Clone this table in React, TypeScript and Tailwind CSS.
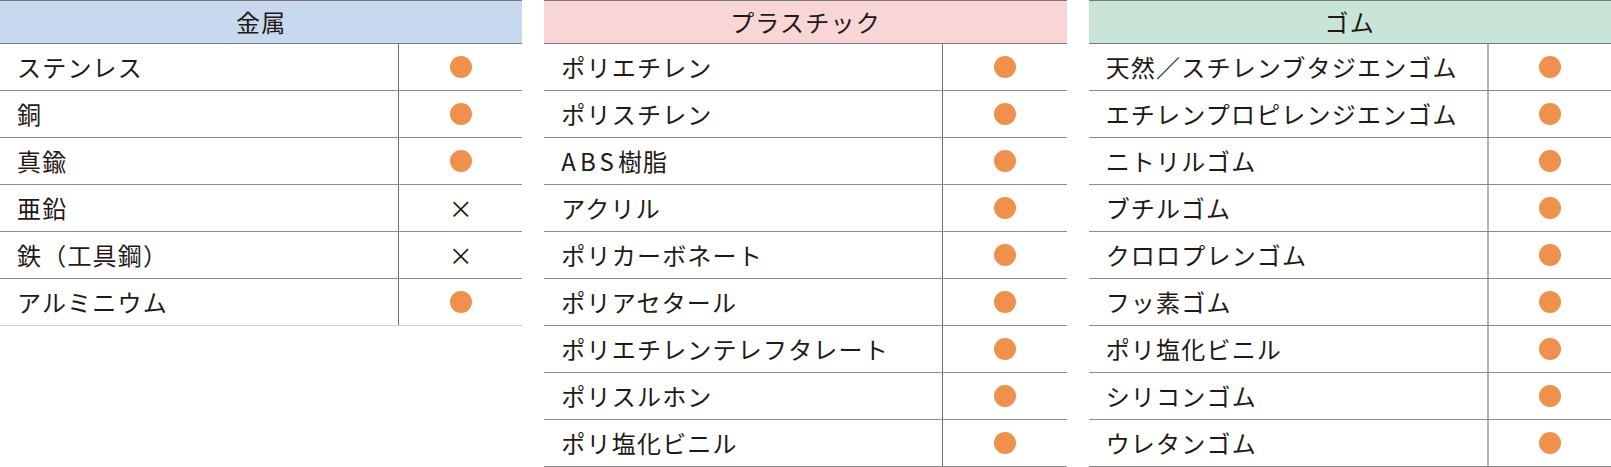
import React from 'react';

type Mark = 'ok' | 'ng';

interface Column {
  title: string;
  headerBg: string;
  dividerClass: string;
  rows: [React.ReactNode, Mark][];
}

const columns: Column[] = [
  {
    title: '金属',
    headerBg: 'bg-[#c6d9ef]',
    dividerClass: 'border-l border-[#6f6f6f]',
    rows: [
      ['ステンレス', 'ok'],
      ['銅', 'ok'],
      ['真鍮', 'ok'],
      ['亜鉛', 'ng'],
      ['鉄（工具鋼）', 'ng'],
      ['アルミニウム', 'ok'],
    ],
  },
  {
    title: 'プラスチック',
    headerBg: 'bg-[#f9d6d6]',
    dividerClass: 'border-l border-[#6f6f6f]',
    rows: [
      ['ポリエチレン', 'ok'],
      ['ポリスチレン', 'ok'],
      [<><span className="tracking-[0.17em]">ABS</span>樹脂</>, 'ok'],
      ['アクリル', 'ok'],
      ['ポリカーボネート', 'ok'],
      ['ポリアセタール', 'ok'],
      ['ポリエチレンテレフタレート', 'ok'],
      ['ポリスルホン', 'ok'],
      ['ポリ塩化ビニル', 'ok'],
    ],
  },
  {
    title: 'ゴム',
    headerBg: 'bg-[#c8e5d7]',
    dividerClass: 'border-l-2 border-[#b4b4b4]',
    rows: [
      ['天然／スチレンブタジエンゴム', 'ok'],
      ['エチレンプロピレンジエンゴム', 'ok'],
      ['ニトリルゴム', 'ok'],
      ['ブチルゴム', 'ok'],
      ['クロロプレンゴム', 'ok'],
      ['フッ素ゴム', 'ok'],
      ['ポリ塩化ビニル', 'ok'],
      ['シリコンゴム', 'ok'],
      ['ウレタンゴム', 'ok'],
    ],
  },
];

const MarkCell: React.FC<{ mark: Mark }> = ({ mark }) =>
  mark === 'ok' ? (
    <span className="block w-[22px] h-[22px] rounded-full bg-[#f0904d]" />
  ) : (
    <span className="text-[24px] leading-none text-[#231815]">×</span>
  );

const Table: React.FC<{ col: Column; lastLight?: boolean }> = ({ col, lastLight }) => (
  <div className="flex-1 min-w-0">
    <div
      className={`h-[44px] border-t border-b border-[#7a7a7a] ${col.headerBg} flex items-center justify-center text-[24px] tracking-[0.05em] text-[#231815]`}
    >
      {col.title}
    </div>
    {col.rows.map(([name, mark], i) => {
      const isLast = i === col.rows.length - 1;
      const lineClass = isLast && lastLight ? 'border-[#d0d0d0]' : 'border-[#8c8c8c]';
      return (
        <div key={i} className={`grid grid-cols-[398px_1fr] h-[47px] border-b ${lineClass}`}>
          <div className="flex items-center pl-[17px] text-[24px] tracking-[0.05em] text-[#231815] whitespace-nowrap">
            {name}
          </div>
          <div className={`flex items-center justify-center ${col.dividerClass}`}>
            <MarkCell mark={mark} />
          </div>
        </div>
      );
    })}
  </div>
);

export default function App() {
  return (
    <div
      className="w-[1611px] h-[467px] bg-white flex items-start gap-[22px] overflow-hidden font-normal"
      style={{ fontFamily: '"Noto Sans CJK JP", "Noto Sans", sans-serif' }}
    >
      <Table col={columns[0]} lastLight />
      <Table col={columns[1]} />
      <Table col={columns[2]} />
    </div>
  );
}
